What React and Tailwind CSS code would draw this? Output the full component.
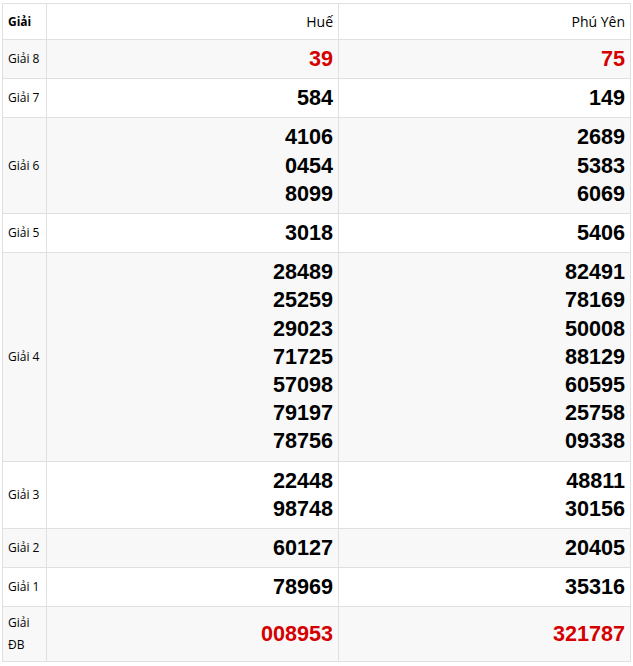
import React from 'react';

const rows = [
  { label: 'Giải 8', a: ['39'], b: ['75'], red: true },
  { label: 'Giải 7', a: ['584'], b: ['149'] },
  { label: 'Giải 6', a: ['4106', '0454', '8099'], b: ['2689', '5383', '6069'] },
  { label: 'Giải 5', a: ['3018'], b: ['5406'] },
  {
    label: 'Giải 4',
    a: ['28489', '25259', '29023', '71725', '57098', '79197', '78756'],
    b: ['82491', '78169', '50008', '88129', '60595', '25758', '09338'],
  },
  { label: 'Giải 3', a: ['22448', '98748'], b: ['48811', '30156'] },
  { label: 'Giải 2', a: ['60127'], b: ['20405'] },
  { label: 'Giải 1', a: ['78969'], b: ['35316'] },
  { label: 'Giải ĐB', a: ['008953'], b: ['321787'], red: true },
];

const labelFont = { fontFamily: '"Open Sans", "Noto Sans", sans-serif' };

const Numbers = ({ items, red }) => (
  <td
    className={`border border-[#e0e0e0] px-[5px] py-[5px] text-right align-middle font-bold text-[21.6px] leading-[28.2px] font-['Liberation_Sans',Arial,sans-serif] ${
      red ? 'text-[#d50000]' : 'text-black'
    }`}
  >
    {items.map((n) => (
      <div key={n}>{n}</div>
    ))}
  </td>
);

export default function App() {
  return (
    <div className="bg-white pl-[2px] pt-[3px] w-[633px] h-[666px]">
      <table className="w-[629px] border-collapse table-fixed" style={labelFont}>
        <colgroup>
          <col className="w-[44px]" />
          <col />
          <col />
        </colgroup>
        <thead>
          <tr className="bg-white h-[36px]">
            <th className="border border-[#e0e0e0] px-[5px] text-left text-[12px] font-bold text-black">Giải</th>
            <th className="border border-[#e0e0e0] px-[5px] text-right text-[14px] font-normal text-black">Huế</th>
            <th className="border border-[#e0e0e0] px-[5px] text-right text-[14px] font-normal text-black">Phú Yên</th>
          </tr>
        </thead>
        <tbody>
          {rows.map((r, i) => (
            <tr key={r.label} className={i % 2 === 0 ? 'bg-[#f8f8f8]' : 'bg-white'}>
              <td className="border border-[#e0e0e0] px-[5px] py-[5px] text-[12px] leading-[22px] text-black align-middle">
                {r.label}
              </td>
              <Numbers items={r.a} red={r.red} />
              <Numbers items={r.b} red={r.red} />
            </tr>
          ))}
        </tbody>
      </table>
    </div>
  );
}
